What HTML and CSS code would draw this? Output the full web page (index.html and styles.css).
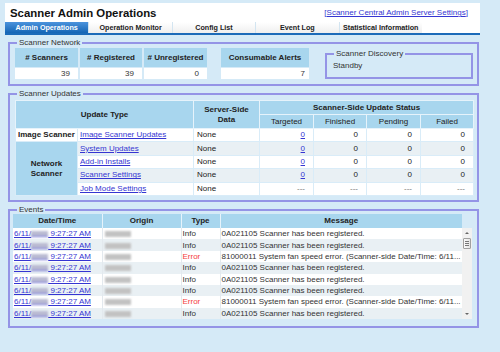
FILE: index.html
```html
<!DOCTYPE html>
<html lang="en">
<head>
    <meta charset="UTF-8">
    <meta name="viewport" content="width=device-width, initial-scale=1.0">
    <title>Scanner Admin Operations</title>
    <link rel="stylesheet" href="styles.css">
</head>
<body>

    <div class="page">
        <div class="header">
            <div class="title-row">
                <h1>Scanner Admin Operations</h1>
                <span class="server-link">[<a href="#">Scanner Central Admin Server Settings</a>]</span>
            </div>
            <ul class="tabs">
                <li class="active">Admin Operations</li>
                <li>Operation Monitor</li>
                <li>Config List</li>
                <li>Event Log</li>
                <li>Statistical Information</li>
            </ul>
        </div>

        <!-- Scanner Network -->
        <fieldset class="box network">
            <legend>Scanner Network</legend>
            <div class="network-row">
                <table class="stat counts">
                    <tr><th># Scanners</th><th># Registered</th><th># Unregistered</th></tr>
                    <tr><td>39</td><td>39</td><td>0</td></tr>
                </table>
                <table class="stat alerts">
                    <tr><th>Consumable Alerts</th></tr>
                    <tr><td>7</td></tr>
                </table>
                <fieldset class="box discovery">
                    <legend>Scanner Discovery</legend>
                    Standby
                </fieldset>
            </div>
        </fieldset>

        <!-- Scanner Updates -->
        <fieldset class="box updates">
            <legend>Scanner Updates</legend>
            <table class="update-table">
                <colgroup>
                    <col style="width: 62px">
                    <col style="width: 116px">
                    <col style="width: 66px">
                    <col style="width: 54px">
                    <col style="width: 53px">
                    <col style="width: 54px">
                    <col style="width: 53px">
                </colgroup>
                <tr class="head">
                    <th colspan="2" rowspan="2">Update Type</th>
                    <th rowspan="2">Server-Side<br>Data</th>
                    <th colspan="4">Scanner-Side Update Status</th>
                </tr>
                <tr class="head">
                    <th class="sub">Targeted</th>
                    <th class="sub">Finished</th>
                    <th class="sub">Pending</th>
                    <th class="sub">Failed</th>
                </tr>
                <tr>
                    <td class="kind plain">Image Scanner</td>
                    <td><a href="#">Image Scanner Updates</a></td>
                    <td class="data">None</td>
                    <td class="num"><a href="#">0</a></td>
                    <td class="num">0</td>
                    <td class="num">0</td>
                    <td class="num">0</td>
                </tr>
                <tr class="alt">
                    <td class="kind" rowspan="4">Network<br>Scanner</td>
                    <td><a href="#">System Updates</a></td>
                    <td class="data">None</td>
                    <td class="num"><a href="#">0</a></td>
                    <td class="num">0</td>
                    <td class="num">0</td>
                    <td class="num">0</td>
                </tr>
                <tr>
                    <td><a href="#">Add-in Installs</a></td>
                    <td class="data">None</td>
                    <td class="num"><a href="#">0</a></td>
                    <td class="num">0</td>
                    <td class="num">0</td>
                    <td class="num">0</td>
                </tr>
                <tr class="alt">
                    <td><a href="#">Scanner Settings</a></td>
                    <td class="data">None</td>
                    <td class="num"><a href="#">0</a></td>
                    <td class="num">0</td>
                    <td class="num">0</td>
                    <td class="num">0</td>
                </tr>
                <tr class="last">
                    <td><a href="#">Job Mode Settings</a></td>
                    <td class="data">None</td>
                    <td class="num dash">---</td>
                    <td class="num dash">---</td>
                    <td class="num dash">---</td>
                    <td class="num dash">---</td>
                </tr>
            </table>
        </fieldset>

        <!-- Events -->
        <fieldset class="box events">
            <legend>Events</legend>
            <table class="event-head">
                <tr>
                    <th class="c-date">Date/Time</th>
                    <th class="c-origin">Origin</th>
                    <th class="c-type">Type</th>
                    <th class="c-msg">Message</th>
                </tr>
            </table>
            <div class="event-body">
                <table class="event-rows" id="eventRows"></table>
                <div class="scrollbar">
                    <div class="sb-up"></div>
                    <div class="sb-thumb"><span class="grip"></span></div>
                    <div class="sb-space"></div>
                    <div class="sb-down"></div>
                </div>
            </div>
        </fieldset>
    </div>

    <script>
        const eventos = ['info', 'info', 'error', 'info', 'info', 'info', 'error', 'info'];

        const mensagens = {
            info: { tipo: 'Info', codigo: '0A021105', texto: 'Scanner has been registered.' },
            error: { tipo: 'Error', codigo: '81000011', texto: 'System fan speed error. (Scanner-side Date/Time: 6/11...' }
        };

        const tabela = document.getElementById('eventRows');

        eventos.forEach(function (tipo, i) {
            const m = mensagens[tipo];
            const linha = document.createElement('tr');
            if (i % 2 === 1) linha.className = 'alt';
            linha.innerHTML =
                '<td class="c-date"><a href="#">6/11/<span class="mask"></span> 9:27:27 AM</a></td>' +
                '<td class="c-origin"><span class="mask origin"></span></td>' +
                '<td class="c-type ' + tipo + '">' + m.tipo + '</td>' +
                '<td class="c-msg">' + m.codigo + ' ' + m.texto + '</td>';
            tabela.appendChild(linha);
        });
    </script>

</body>
</html>
```

FILE: styles.css
```css
* {
    margin: 0;
    padding: 0;
    box-sizing: border-box;
}
body {
    background-color: #d5eaf7;
    font-family: "Liberation Sans", Arial, sans-serif;
    font-size: 8px;
    color: #222;
}
a {
    color: #3535d2;
}
.page {
    width: 475px;
    margin: 3px 0 0 5px;
}

/* Header and tabs */
.header {
    width: 475px;
    background-color: #fff;
    border-bottom: 2px solid #1c6bb9;
    overflow: hidden;
}
.title-row {
    display: flex;
    justify-content: space-between;
    align-items: center;
    height: 19px;
    padding: 0 12px 0 5px;
}
h1 {
    font-size: 11.4px;
    font-weight: bold;
    color: #111;
}
.server-link {
    font-size: 8px;
    color: #3535d2;
}
.tabs {
    display: flex;
    list-style: none;
    height: 11px;
}
.tabs li {
    width: 83.4px;
    line-height: 11px;
    text-align: center;
    font-size: 7.2px;
    font-weight: bold;
    color: #222;
    background: linear-gradient(#ffffff, #efefef);
    border-left: 1px solid #d3e5f1;
}
.tabs li:first-child {
    border-left: none;
}
.tabs li.active {
    background: linear-gradient(#4b93dc, #1565b5);
    color: #fff;
}

/* Group boxes */
fieldset.box {
    border: 2px solid #9494e6;
    margin: 3px 1px 0 3px;
    min-width: 0;
}
legend {
    font-size: 8px;
    line-height: 10px;
    color: #333;
    padding: 0 2px;
}
.network {
    padding: 0 4px 4px 5px;
}
.network legend {
    margin-left: 2px;
}
.network-row {
    display: flex;
    align-items: flex-start;
}
table.stat {
    border-spacing: 2px 1px;
    margin: -1px 0 0 -2px;
}
table.stat th {
    height: 19px;
    background-color: #a8d6ee;
    font-weight: bold;
    text-align: center;
    padding: 0;
}
table.stat td {
    height: 11px;
    background-color: #fff;
    text-align: right;
    padding: 0 8px 0 0;
    color: #333;
}
.counts th:nth-child(1), .counts th:nth-child(3) {
    width: 63px;
}
.counts th:nth-child(2) {
    width: 62px;
}
.alerts {
    margin-left: 10px !important;
}
.alerts th {
    width: 88px;
}
.alerts td {
    padding-right: 4px !important;
}
fieldset.discovery {
    width: 148px;
    margin: 1px 0 0 14px;
    padding: 2px 6px 6px 6px;
    line-height: 10px;
    color: #333;
}
.discovery legend {
    margin-left: 1px;
}

/* Scanner updates */
.updates {
    margin-top: 2px;
    padding: 1px 4px 4px 5px;
}
.updates legend {
    margin-left: 2px;
}
.update-table {
    width: 458px;
    table-layout: fixed;
    border-collapse: collapse;
    background-color: #fff;
}
.update-table th, .update-table td {
    border: 1px solid #d9ecf8;
    padding: 0 2px;
    line-height: 10px;
}
.update-table tr.head {
    height: 14px;
}
.update-table th {
    background-color: #a8d6ee;
    font-weight: bold;
    text-align: center;
    border-color: #e6f3fb;
}
.update-table th.sub {
    font-weight: normal;
}
.update-table tr {
    height: 13.4px;
}
.update-table tr.alt td {
    background-color: #e9f0f4;
}
.update-table td.kind {
    font-weight: bold;
    text-align: center;
    background-color: #a8d6ee !important;
}
.update-table td.kind.plain {
    background-color: #fff !important;
    text-align: left;
}
.update-table td.data {
    padding-left: 3px;
}
.update-table td.num {
    text-align: right;
    padding-right: 8px;
}
.update-table td.dash {
    color: #777;
}

/* Events */
.events {
    margin-top: 4px;
    padding: 0 5px 7px 3px;
}
.events legend {
    margin-left: 4px;
}
.event-head, .event-rows {
    width: 449px;
    table-layout: fixed;
    border-collapse: collapse;
}
.event-head {
    margin-top: -1px;
}
.event-head th {
    height: 14px;
    background-color: #a8d6ee;
    font-weight: bold;
    text-align: center;
    border-left: 1px solid #e6f3fb;
}
.event-head th:first-child {
    border-left: none;
}
.c-date {
    width: 89px;
}
.c-origin {
    width: 79px;
}
.c-type {
    width: 39px;
}
.c-msg {
    width: 242px;
}
.event-body {
    display: flex;
}
.event-rows {
    background-color: #fff;
}
.event-rows tr {
    height: 11.4px;
}
.event-rows tr.alt td {
    background-color: #e9f0f4;
}
.event-rows td {
    padding: 0 0 0 1px;
    line-height: 11px;
    white-space: nowrap;
    overflow: hidden;
    color: #333;
    border-left: 1px solid #e3e9ee;
}
.event-rows td:first-child {
    border-left: none;
}
.event-rows td.error {
    color: #f53c3c;
}
.mask {
    display: inline-block;
    width: 17px;
    height: 6px;
    vertical-align: -1px;
    background-color: #b9bad2;
    border-bottom: 1px solid #6e6ed8;
    filter: blur(1px);
}
.mask.origin {
    width: 26px;
    border-bottom: none;
    background-color: #c2c2c2;
    margin-left: 1px;
}
.scrollbar {
    width: 10px;
    height: 91px;
    background-color: #f1f1f1;
    display: flex;
    flex-direction: column;
    align-items: center;
}
.sb-up, .sb-down {
    height: 10px;
    width: 10px;
    position: relative;
}
.sb-up::after, .sb-down::after {
    content: "";
    position: absolute;
    left: 3px;
    border-left: 2px solid transparent;
    border-right: 2px solid transparent;
}
.sb-up::after {
    top: 4px;
    border-bottom: 2px solid #666;
}
.sb-down::after {
    top: 4px;
    border-top: 2px solid #666;
}
.sb-thumb {
    width: 8px;
    height: 11px;
    border: 1px solid #a0a0a0;
    border-radius: 1px;
    background: linear-gradient(90deg, #fafafa, #e4e4e4);
    display: flex;
    align-items: center;
    justify-content: center;
}
.grip {
    width: 4px;
    height: 5px;
    background: repeating-linear-gradient(#777 0 1px, transparent 1px 2px);
}
.sb-space {
    flex: 1;
}
```
